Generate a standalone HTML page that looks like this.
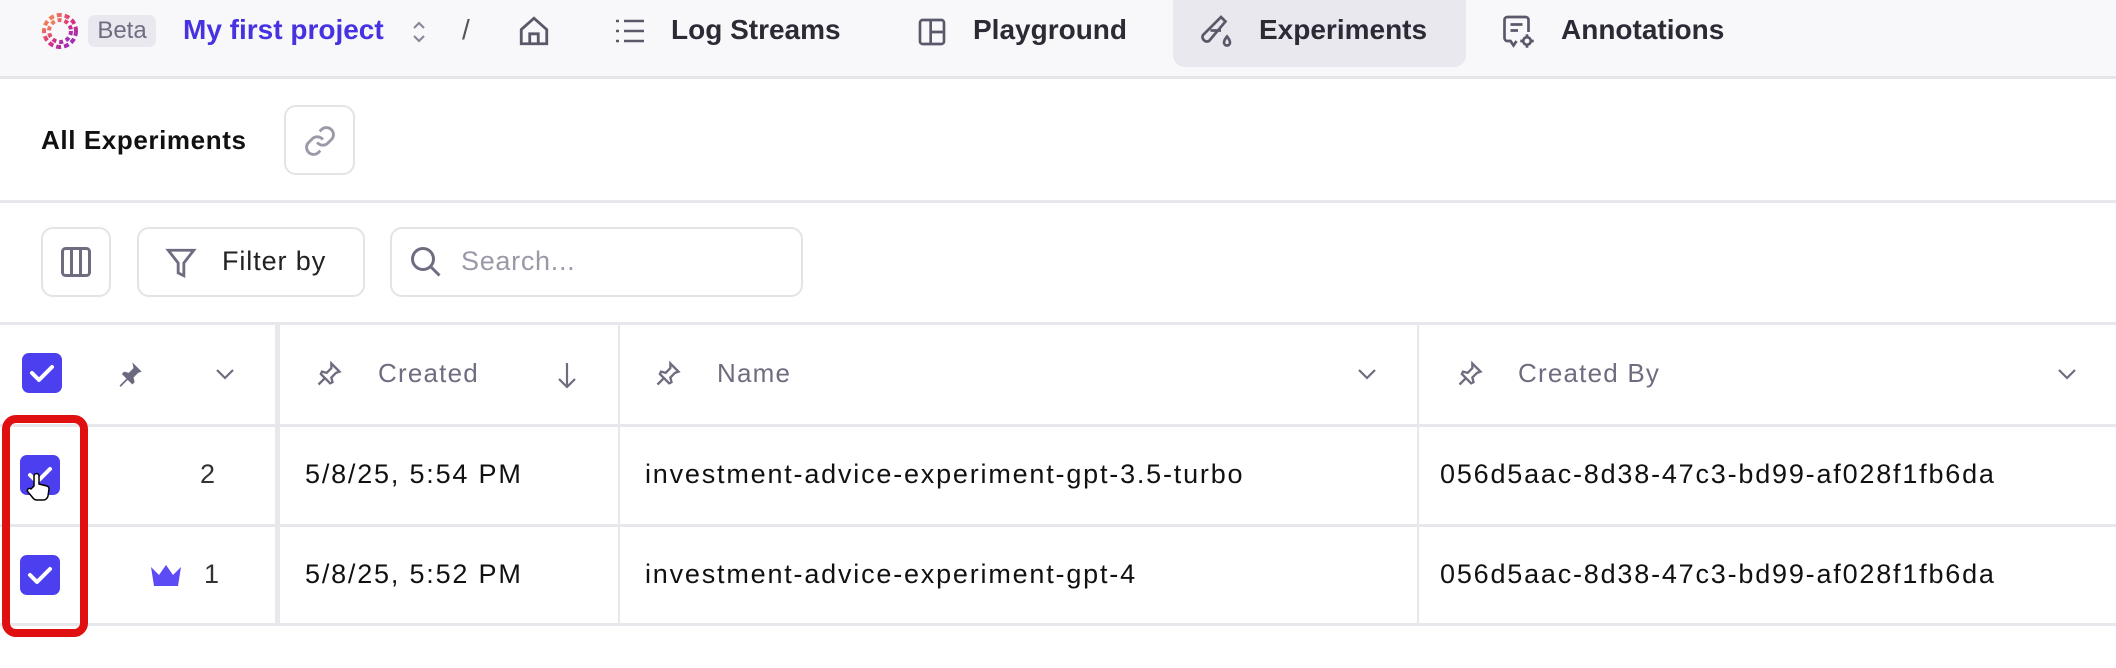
<!DOCTYPE html>
<html><head><meta charset="utf-8"><style>
*{box-sizing:border-box;margin:0;padding:0}
body{width:2116px;height:668px;background:#fff;font-family:"Liberation Sans",sans-serif;position:relative;overflow:hidden;color:#1a1a22}
.a{position:absolute}
.nav{left:0;top:0;width:2116px;height:79px;background:#f8f8fa;border-bottom:3px solid #e6e6ea}
.nt{font-size:28px;font-weight:bold;color:#2b2a35;top:14px}
.hl{height:3px;background:#e8e8ec;left:0;width:2116px}
.btn{border:2px solid #e4e4e8;border-radius:12px;background:#fff}
.th{font-size:26px;color:#6e6d80;top:358px;letter-spacing:1.2px}
.td{font-size:27px;color:#111;letter-spacing:1.8px}
.cb{width:40px;height:40px;background:#4c3ff0;border-radius:7px}
.vl{top:322px;height:302px;width:2px;background:#e8e8ec}
</style></head><body>
<div class="a nav"></div>
<svg class="a" style="left:38px;top:9px" width="44" height="44" viewBox="0 0 44 44">
<defs><linearGradient id="g" x1="0" y1="0" x2="1" y2="1"><stop offset="0" stop-color="#f2a050"/><stop offset=".5" stop-color="#e0307a"/><stop offset="1" stop-color="#8a2cc8"/></linearGradient></defs>
<g fill="none" stroke="url(#g)" stroke-width="4">
<circle cx="22" cy="22" r="16" stroke-dasharray="5 3"/><circle cx="22" cy="22" r="11" stroke-dasharray="4 3"/></g></svg>
<div class="a" style="left:88px;top:15px;width:68px;height:32px;background:#e8e8ee;border-radius:7px;font-size:24px;color:#6e6d80;text-align:center;line-height:32px">Beta</div>
<div class="a" style="left:183px;top:14px;font-size:28px;color:#4632e0;font-weight:bold">My first project</div>
<svg class="a" style="left:409px;top:18px" width="20" height="28" viewBox="0 0 20 28" fill="none" stroke="#8a8a98" stroke-width="2.2"><path d="M5 10l5-5 5 5M5 18l5 5 5-5"/></svg>
<div class="a" style="left:462px;top:14px;font-size:28px;color:#555">/</div>
<svg class="a" style="left:517px;top:14px" width="34" height="34" viewBox="0 0 24 24" fill="none" stroke="#5a596a" stroke-width="2"><path d="M3 11l9-8 9 8v10H3zM9 21v-7h6v7"/></svg>
<svg class="a" style="left:614px;top:18px" width="32" height="26" viewBox="0 0 32 26" fill="none" stroke="#5a596a" stroke-width="2.5"><path d="M2 3h3M10 3h20M2 13h3M10 13h20M2 23h3M10 23h20"/></svg>
<div class="a nt" style="left:671px">Log Streams</div>
<svg class="a" style="left:916px;top:16px" width="32" height="32" viewBox="0 0 24 24" fill="none" stroke="#5a596a" stroke-width="2"><rect x="3" y="3" width="18" height="18" rx="2"/><path d="M11 3v18M11 12h10"/></svg>
<div class="a nt" style="left:973px">Playground</div>
<div class="a" style="left:1173px;top:0;width:293px;height:67px;background:#e8e8ee;border-radius:0 0 12px 12px"></div>
<svg class="a" style="left:1200px;top:14px" width="36" height="36" viewBox="0 0 24 24" fill="none" stroke="#5a596a" stroke-width="1.8"><path d="M14 2l3 3-11 13a3 3 0 01-4-4zM7 11h7M18 15s-2 2.5-2 4a2 2 0 004 0c0-1.5-2-4-2-4z"/></svg>
<div class="a nt" style="left:1259px">Experiments</div>
<svg class="a" style="left:1500px;top:14px" width="36" height="36" viewBox="0 0 24 24" fill="none" stroke="#5a596a" stroke-width="1.8"><path d="M5 2h12a2 2 0 012 2v8M5 2a2 2 0 00-2 2v12a2 2 0 002 2h2l2 3 2-3M7 7h8M7 11h5"/><circle cx="18" cy="18" r="2.5"/><path d="M18 13.5v2M18 20.5v2M13.5 18h2M20.5 18h2"/></svg>
<div class="a nt" style="left:1561px">Annotations</div>

<div class="a" style="left:41px;top:125px;font-size:26px;font-weight:bold;color:#111;letter-spacing:0.6px">All Experiments</div>
<div class="a btn" style="left:284px;top:105px;width:71px;height:70px"></div>
<svg class="a" style="left:303px;top:124px" width="34" height="34" viewBox="0 0 24 24" fill="none" stroke="#9a99a8" stroke-width="2"><path d="M10 13a5 5 0 007.5.5l3-3a5 5 0 00-7-7l-1.7 1.7M14 11a5 5 0 00-7.5-.5l-3 3a5 5 0 007 7l1.7-1.7"/></svg>
<div class="a hl" style="top:200px"></div>

<div class="a btn" style="left:41px;top:227px;width:70px;height:70px"></div>
<svg class="a" style="left:58px;top:244px" width="36" height="36" viewBox="0 0 24 24" fill="none" stroke="#6e6d80" stroke-width="2"><rect x="3" y="3" width="18" height="18" rx="2"/><path d="M9 3v18M15 3v18"/></svg>
<div class="a btn" style="left:137px;top:227px;width:228px;height:70px"></div>
<svg class="a" style="left:164px;top:245px" width="34" height="36" viewBox="0 0 24 24" fill="none" stroke="#6e6d80" stroke-width="2"><path d="M3 3h18l-7 9v9l-4-2v-7z"/></svg>
<div class="a" style="left:222px;top:246px;font-size:27px;color:#222;letter-spacing:0.9px">Filter by</div>
<div class="a btn" style="left:390px;top:227px;width:413px;height:70px"></div>
<svg class="a" style="left:408px;top:244px" width="36" height="36" viewBox="0 0 24 24" fill="none" stroke="#6e6d80" stroke-width="2"><circle cx="10" cy="10" r="7"/><path d="M15 15l6 6"/></svg>
<div class="a" style="left:461px;top:246px;font-size:27px;color:#9a99a8;letter-spacing:0.7px">Search...</div>
<div class="a hl" style="top:322px"></div>

<div class="a hl" style="top:424px"></div>
<div class="a hl" style="top:524px"></div>
<div class="a hl" style="top:623px"></div>
<div class="a vl" style="left:275px;width:5px"></div>
<div class="a vl" style="left:618px"></div>
<div class="a vl" style="left:1417px"></div>

<div class="a cb" style="left:22px;top:353px"></div>
<div class="a cb" style="left:20px;top:455px"></div>
<div class="a cb" style="left:20px;top:555px"></div>
<svg class="a" style="left:0;top:0" width="100" height="668"><g fill="none" stroke="#fff" stroke-width="4" stroke-linecap="round" stroke-linejoin="round"><path d="M32 373l7 7 13-13M30 475l7 7 13-13M30 575l7 7 13-13"/></g>
<rect x="6" y="419" width="78" height="214" rx="10" fill="none" stroke="#e01010" stroke-width="8"/>
<path d="M34 486v-10a2.5 2.5 0 015 0v8l8 2a3 3 0 012 3l-1 7a5 5 0 01-5 4h-6a5 5 0 01-4-2l-5-6a2 2 0 013-3z" fill="#fff" stroke="#000" stroke-width="1.5"/></svg>
<svg class="a" style="left:116px;top:360px" width="28" height="28" viewBox="0 0 24 24" fill="#6a6980"><path d="M14 2l8 8-3 1-4 4 1 4-2 2-4-4-6 6-1-1 6-6-4-4 2-2 4 1 4-4z"/></svg>
<svg class="a" style="left:213px;top:364px" width="24" height="20" viewBox="0 0 24 20" fill="none" stroke="#6e6d80" stroke-width="2.2"><path d="M4 6l8 8 8-8"/></svg>
<svg class="a" style="left:315px;top:360px" width="28" height="28" viewBox="0 0 24 24" fill="none" stroke="#6e6d80" stroke-width="2"><path d="M14 3l7 7-3 1-4 4 1 4-2 1-8-8 1-2 4 1 4-4zM8 16l-5 5"/></svg>
<div class="a th" style="left:378px">Created</div>
<svg class="a" style="left:555px;top:360px" width="24" height="30" viewBox="0 0 24 30" fill="none" stroke="#6e6d80" stroke-width="2.2"><path d="M12 3v24M4 19l8 8 8-8"/></svg>
<svg class="a" style="left:654px;top:360px" width="28" height="28" viewBox="0 0 24 24" fill="none" stroke="#6e6d80" stroke-width="2"><path d="M14 3l7 7-3 1-4 4 1 4-2 1-8-8 1-2 4 1 4-4zM8 16l-5 5"/></svg>
<div class="a th" style="left:717px">Name</div>
<svg class="a" style="left:1355px;top:364px" width="24" height="20" viewBox="0 0 24 20" fill="none" stroke="#6e6d80" stroke-width="2.2"><path d="M4 6l8 8 8-8"/></svg>
<svg class="a" style="left:1456px;top:360px" width="28" height="28" viewBox="0 0 24 24" fill="none" stroke="#6e6d80" stroke-width="2"><path d="M14 3l7 7-3 1-4 4 1 4-2 1-8-8 1-2 4 1 4-4zM8 16l-5 5"/></svg>
<div class="a th" style="left:1518px">Created By</div>
<svg class="a" style="left:2055px;top:364px" width="24" height="20" viewBox="0 0 24 20" fill="none" stroke="#6e6d80" stroke-width="2.2"><path d="M4 6l8 8 8-8"/></svg>

<div class="a td" style="left:200px;top:459px;color:#333">2</div>
<div class="a td" style="left:305px;top:459px">5/8/25, 5:54 PM</div>
<div class="a td" style="left:645px;top:459px">investment-advice-experiment-gpt-3.5-turbo</div>
<div class="a td" style="left:1440px;top:459px">056d5aac-8d38-47c3-bd99-af028f1fb6da</div>
<svg class="a" style="left:150px;top:564px" width="33" height="22" viewBox="0 0 33 22" fill="#5b4cf5"><path d="M1 3l8 8 7-10 7 10 8-8-3 19H4z"/></svg>
<div class="a td" style="left:204px;top:559px;color:#333">1</div>
<div class="a td" style="left:305px;top:559px">5/8/25, 5:52 PM</div>
<div class="a td" style="left:645px;top:559px">investment-advice-experiment-gpt-4</div>
<div class="a td" style="left:1440px;top:559px">056d5aac-8d38-47c3-bd99-af028f1fb6da</div>
</body></html>
